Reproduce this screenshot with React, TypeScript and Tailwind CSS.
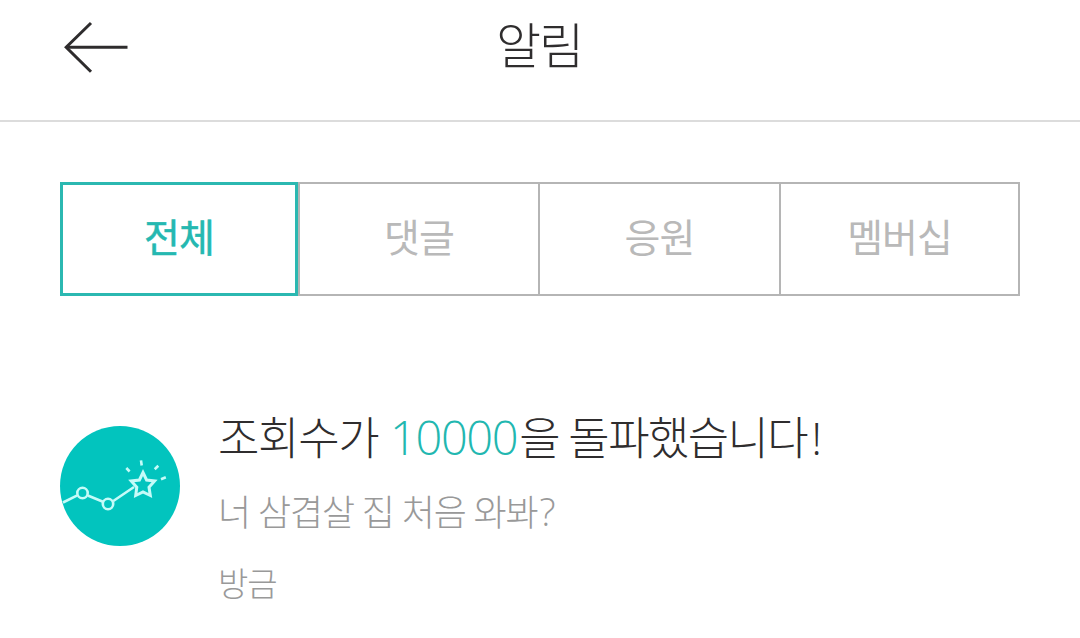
const TABS = ['댓글', '응원', '멤버십'];

const BackArrow = () => (
  <svg width="66" height="54" viewBox="0 0 66 54" fill="none" stroke="#2e2c2d" strokeWidth="3">
    <path d="M64.5 27.3H3" />
    <path d="M28 3L3.2 27.3L28 51.7" />
  </svg>
);

const ViewsIcon = () => (
  <svg width="120" height="120" viewBox="0 0 120 120" fill="none" stroke="#c5fbf8">
    <circle cx="60" cy="60" r="60" fill="#02c4be" stroke="none" />
    <g strokeWidth="2.6">
      <path d="M3 76.5L17.3 69.3M27.8 69.5L43 75.8M53.3 75L74 61" />
      <circle cx="22.5" cy="67" r="5.2" />
      <circle cx="48" cy="78" r="5.2" />
      <path d="M66.3 42L69.6 45.5M81 34.3L81.7 39.5M98.3 39.7L94.7 43.2M105.8 51.3L101 53.3" />
    </g>
    <path
      d="M83 46.5L86.6 54L94.6 55L89 61.2L90.3 69.5L83 66L75.7 69.5L76.8 61.2L71.2 55L79.4 54Z"
      strokeWidth="3"
    />
  </svg>
);

export default function App() {
  return (
    <div className="w-full h-[638px] overflow-hidden bg-white font-light text-[#2f2d2e] font-['Noto_Sans_CJK_KR',sans-serif]">
      <header className="grid grid-cols-[1fr_auto_1fr] items-start h-[122px] border-b-2 border-[#dcdcdc]">
        <button type="button" aria-label="뒤로" className="ml-[63px] mt-5 w-fit">
          <BackArrow />
        </button>
        <h1 className="mt-[13px] -ml-0.5 text-[49px] leading-[60px] tracking-[-2px]">알림</h1>
      </header>

      <nav className="flex mx-[60px] mt-[60px] h-[114px] text-[39px] tracking-[-1px]">
        <button
          type="button"
          className="w-[238px] pb-2 border-3 border-[#2bb8b1] font-normal text-[#25b8b1] [-webkit-text-stroke:0.5px_#25b8b1]"
        >
          전체
        </button>
        <div className="grid grid-cols-[240px_241px_239px] border-l-2 border-[#b5b5b5]">
          {TABS.map((tab) => (
            <button
              key={tab}
              type="button"
              className="pb-2 border-2 border-l-0 border-[#b5b5b5] font-normal text-[#b9b9b9]"
            >
              {tab}
            </button>
          ))}
        </div>
      </nav>

      <article className="flex gap-[38px] px-[60px] mt-[114px]">
        <div className="mt-4 shrink-0">
          <ViewsIcon />
        </div>
        <div className="whitespace-nowrap">
          <h2 className="-mt-[3px] h-[63px] text-[45px] leading-[58px] tracking-[-1.3px] [word-spacing:3px]">
            조회수가{' '}
            <span className="font-['Open_Sans'] text-[47px] tracking-[-1.4px] text-[#22b7b0]">10000</span>
            <span className="ml-0.5 tracking-[-1.6px] [word-spacing:1px]">을 돌파했습니다</span>
            <span className="ml-1 font-['Open_Sans']">!</span>
          </h2>
          <p className="mt-4 h-12 text-[36px] leading-[48px] tracking-[-1.1px] text-[#999] [word-spacing:1px]">
            너 삼겹살 집 처음 와봐<span className="ml-0.5 font-['Open_Sans'] text-[38px]">?</span>
          </p>
          <p className="mt-6 h-12 text-[33px] leading-[48px] tracking-[-1.2px] text-[#999]">방금</p>
        </div>
      </article>
    </div>
  );
}
